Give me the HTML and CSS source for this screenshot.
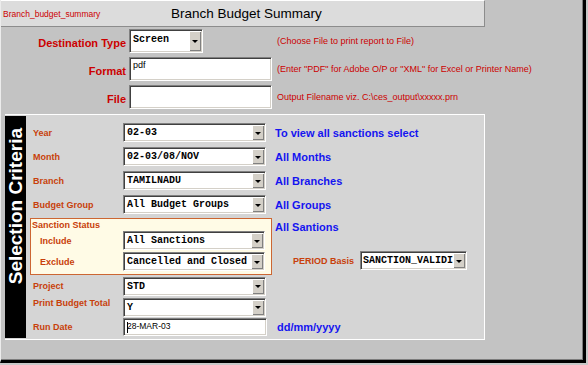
FILE: index.html
```html
<!DOCTYPE html>
<html lang="en">
<head>
	<meta charset="UTF-8">
	<title>Branch Budget Summary</title>
	<link rel="stylesheet" href="styles.css">
</head>
<body>
	<div class="window">
		<div class="titlebar">
			<span class="formname">Branch_budget_summary</span>
			<span class="title">Branch Budget Summary</span>
		</div>

		<div class="output">
			<span class="out-label">Destination Type</span>
			<div class="select select-dest"><span class="val">Screen</span><span class="btn"></span></div>
			<span class="hint">(Choose File to print report to File)</span>

			<span class="out-label">Format</span>
			<div class="field"><span class="txt">pdf</span></div>
			<span class="hint">(Enter "PDF" for Adobe O/P or "XML" for Excel or Printer Name)</span>

			<span class="out-label">File</span>
			<div class="field"></div>
			<span class="hint">Output Filename viz. C:\ces_output\xxxxx.prn</span>
		</div>

		<div class="panel">
			<div class="side"><span class="side-text">Selection Criteria</span></div>
			<div class="criteria">
				<div class="row">
					<span class="lbl">Year</span>
					<div class="select"><span class="val">02-03</span><span class="btn"></span></div>
					<span class="note">To view all sanctions select</span>
				</div>
				<div class="row">
					<span class="lbl">Month</span>
					<div class="select"><span class="val">02-03/08/NOV</span><span class="btn"></span></div>
					<span class="note">All Months</span>
				</div>
				<div class="row">
					<span class="lbl">Branch</span>
					<div class="select"><span class="val">TAMILNADU</span><span class="btn"></span></div>
					<span class="note">All Branches</span>
				</div>
				<div class="row row-group">
					<span class="lbl">Budget Group</span>
					<div class="select"><span class="val">All Budget Groups</span><span class="btn"></span></div>
					<span class="note">All Groups</span>
				</div>

				<div class="sanction-wrap">
					<div class="sanction">
						<div class="sanction-title">Sanction Status</div>
						<div class="row sub">
							<span class="lbl">Include</span>
							<div class="select"><span class="val">All Sanctions</span><span class="btn"></span></div>
						</div>
						<div class="row sub">
							<span class="lbl">Exclude</span>
							<div class="select"><span class="val">Cancelled and Closed</span><span class="btn"></span></div>
						</div>
					</div>
					<div class="sanction-side">
						<span class="note">All Santions</span>
						<div class="period">
							<span class="lbl">PERIOD Basis</span>
							<div class="select select-period"><span class="val">SANCTION_VALIDI</span><span class="btn"></span></div>
						</div>
					</div>
				</div>

				<div class="row row-project">
					<span class="lbl">Project</span>
					<div class="select"><span class="val">STD</span><span class="btn"></span></div>
				</div>
				<div class="row row-total">
					<span class="lbl lbl-top">Print Budget Total</span>
					<div class="select"><span class="val">Y</span><span class="btn"></span></div>
				</div>
				<div class="row row-date">
					<span class="lbl">Run Date</span>
					<div class="field field-date"><span class="caret"></span><span class="txt">28-MAR-03</span></div>
					<span class="note note-date">dd/mm/yyyy</span>
				</div>
			</div>
		</div>
	</div>
</body>
</html>
```

FILE: styles.css
```css
html, body {
	margin: 0;
	padding: 0;
	background: #c8c8c8;
}

.window {
	box-sizing: border-box;
	width: 586px;
	height: 363px;
	background: #c3c3c3;
	border-left: 1px solid #ececec;
	border-right: 3px solid #000;
	border-bottom: 3px solid #000;
	box-shadow: inset -1px -1px 0 #7c7c7c;
	font-family: "Liberation Sans", Arial, sans-serif;
}

/* title */
.titlebar {
	box-sizing: border-box;
	display: flex;
	align-items: center;
	width: 484px;
	height: 27px;
	background: #dcdcdc;
	border-top: 1px solid #fff;
	border-right: 1px solid #8c8c8c;
	border-bottom: 1px solid #8c8c8c;
}

.formname {
	width: 168px;
	padding-left: 2px;
	font-size: 8.5px;
	color: #cc0000;
}

.title {
	font-size: 13.5px;
	color: #000;
}

/* output options */
.output {
	display: grid;
	grid-template-columns: 125px 146px auto;
	grid-auto-rows: 24px;
	row-gap: 4px;
	margin-top: 2px;
}

.out-label {
	align-self: center;
	padding-top: 3px;
	text-align: right;
	font-size: 11px;
	font-weight: bold;
	color: #cc0000;
}

.output .select,
.output .field {
	margin-left: 3px;
}

.hint {
	align-self: center;
	margin-left: 5px;
	font-size: 9px;
	color: #cc0000;
	white-space: nowrap;
}

/* sunken controls */
.select,
.field {
	box-sizing: border-box;
	display: flex;
	background: #fff;
	border: 1px solid;
	border-color: #808080 #fff #fff #808080;
	box-shadow: inset 1px 1px 0 #404040, inset -1px -1px 0 #d4d0c8;
	overflow: hidden;
}

.select .val {
	flex: 1;
	align-self: center;
	padding-left: 3px;
	font-family: "Liberation Mono", "Courier New", monospace;
	font-size: 10px;
	font-weight: bold;
	color: #000;
	white-space: nowrap;
	overflow: hidden;
}

.select .btn {
	position: relative;
	flex: none;
	width: 12px;
	margin: 1px 1px 1px 0;
	background: #d4d0c8;
	box-shadow: inset 1px 1px 0 #fff, inset -1px -1px 0 #808080;
}

.select .btn::after {
	content: "";
	position: absolute;
	left: 3px;
	top: 50%;
	margin-top: -1px;
	border-left: 3px solid transparent;
	border-right: 3px solid transparent;
	border-top: 3px solid #000;
}

.select-dest {
	width: 74px;
}

.select-dest .val {
	align-self: flex-start;
	padding-top: 4px;
}

.field .txt {
	padding: 2px 0 0 3px;
	font-size: 9px;
	color: #000;
}

/* selection panel */
.panel {
	box-sizing: border-box;
	display: flex;
	width: 480px;
	height: 226px;
	margin: 5px 0 0 4px;
	background: #d5d5d5;
	border: 1px solid #fff;
	border-left: 0;
}

.side {
	flex: none;
	width: 21px;
	margin: 1px 0;
	padding-top: 12px;
	background: #000;
	box-sizing: border-box;
}

.side-text {
	display: block;
	writing-mode: vertical-rl;
	transform: rotate(180deg);
	line-height: 21px;
	font-size: 19px;
	font-weight: bold;
	color: #fff;
	white-space: nowrap;
}

.criteria {
	flex: 1;
	padding: 8px 0 0 4px;
}

.row {
	display: flex;
	align-items: center;
	height: 19px;
	padding-left: 3px;
	margin-bottom: 5px;
}

.lbl {
	flex: none;
	width: 90px;
	font-size: 9px;
	font-weight: bold;
	color: #c8400a;
	white-space: nowrap;
}

.lbl-top {
	align-self: flex-start;
}

.row .select,
.row .field {
	width: 143px;
	height: 19px;
}

.note {
	margin-left: 9px;
	font-size: 11px;
	font-weight: bold;
	color: #1414f0;
	white-space: nowrap;
}

.row-group {
	margin-top: 1px;
	margin-bottom: 4px;
}

/* sanction status box */
.sanction-wrap {
	display: flex;
}

.sanction {
	box-sizing: border-box;
	width: 242px;
	padding-bottom: 3px;
	background: #fffbe6;
	border: 1px solid #cc6633;
}

.sanction-title {
	height: 12px;
	line-height: 12px;
	padding-left: 1px;
	font-size: 9px;
	font-weight: bold;
	color: #c8400a;
}

.row.sub {
	padding-left: 9px;
	margin-bottom: 2px;
}

.row.sub:last-child {
	margin-bottom: 0;
}

.row.sub .lbl {
	width: 83px;
}

.row.sub .select {
	width: 142px;
}

.sanction-side {
	display: flex;
	flex-direction: column;
	margin-left: 3px;
}

.sanction-side .note {
	margin-left: 0;
	line-height: 18px;
}

.period {
	display: flex;
	align-items: center;
	height: 19px;
	margin: 15px 0 0 18px;
}

.period .lbl {
	width: 67px;
}

.select-period {
	width: 107px;
	height: 19px;
}

.select-period .val {
	padding-left: 2px;
}

.row-project {
	height: 18px;
	margin-top: 2px;
	margin-bottom: 3px;
}

.row-total {
	height: 18px;
	margin-bottom: 2px;
}

.row-date {
	height: 18px;
	margin-bottom: 0;
}

.row .field-date {
	width: 144px;
	height: 18px;
}

.field-date .caret {
	width: 1px;
	height: 11px;
	margin: 3px -2px 0 3px;
	background: #000;
}

.field-date .txt {
	padding-left: 1px;
	font-size: 8.5px;
}

.note-date {
	margin-left: 10px;
}
```
